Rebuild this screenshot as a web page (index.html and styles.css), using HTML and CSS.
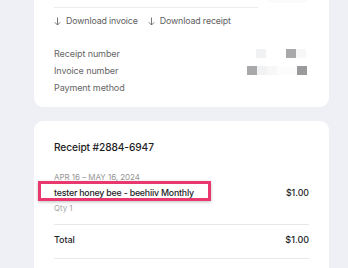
FILE: index.html
```html
<!DOCTYPE html>
<html lang="en">
<head>
  <meta charset="UTF-8" />
  <meta name="viewport" content="width=device-width, initial-scale=1.0" />
  <title>Receipt</title>
  <link rel="stylesheet" href="styles.css">
</head>
<body>
  <div class="page">
    <div class="card card-details">
      <div class="top-row">
        <div class="top-line"></div>
        <div class="top-pill"></div>
      </div>

      <div class="downloads">
        <a href="#" class="download-link">
          <svg class="arrow" width="7" height="9" viewBox="0 0 7 9"><path d="M3.5 0.5V8M0.8 5.3L3.5 8L6.2 5.3" fill="none" stroke="#6a6a6a" stroke-width="0.9"/></svg>Download invoice
        </a>
        <a href="#" class="download-link">
          <svg class="arrow" width="7" height="9" viewBox="0 0 7 9"><path d="M3.5 0.5V8M0.8 5.3L3.5 8L6.2 5.3" fill="none" stroke="#6a6a6a" stroke-width="0.9"/></svg>Download receipt
        </a>
      </div>

      <div class="meta">
        <div class="meta-row">
          <span class="meta-label">Receipt number</span>
          <span class="blur-value receipt-blur">
            <i class="px px-faint"></i><i class="px px-gap"></i><i class="px px-dark"></i><i class="px px-ghost"></i>
          </span>
        </div>
        <div class="meta-row">
          <span class="meta-label">Invoice number</span>
          <span class="blur-value invoice-blur">
            <i class="px px-dark"></i><i class="px px-faint"></i><i class="px px-ghost"></i><i class="px px-ghost2"></i><i class="px px-darker"></i>
          </span>
        </div>
        <div class="meta-row">
          <span class="meta-label">Payment method</span>
        </div>
      </div>
    </div>

    <div class="card card-receipt">
      <h2 class="receipt-title">Receipt #2884-6947</h2>

      <div class="line-item">
        <div class="period">APR 16 – MAY 16, 2024</div>
        <div class="item-row">
          <span class="item-name">tester honey bee - beehiiv Monthly<span class="highlight"></span></span>
          <span class="amount">$1.00</span>
        </div>
        <div class="qty">Qty 1</div>
      </div>

      <div class="total-row">
        <span>Total</span>
        <span class="amount">$1.00</span>
      </div>
    </div>
  </div>
</body>
</html>
```

FILE: styles.css
```css
body {
  margin: 0;
  background: #eff0f6;
  font-family: 'Inter', 'Liberation Sans', sans-serif;
  color: #1d1d1f;
  overflow: hidden;
}

.page {
  width: 295px;
  margin-left: 34px;
  margin-top: -20px;
  display: flex;
  flex-direction: column;
  gap: 14px;
}

.card {
  background: #fff;
  border-radius: 9px;
  padding: 0 20px;
}

/* first card, top is scrolled away */
.card-details {
  padding-top: 12px;
  padding-bottom: 11px;
}

.top-row {
  display: flex;
  align-items: flex-end;
  height: 16px;
  gap: 8px;
}

.top-line {
  width: 208px;
  border-bottom: 1px solid #ececef;
}

.top-pill {
  width: 44px;
  height: 14px;
  margin-bottom: 5px;
  border-radius: 7px;
  background: #fafafc;
}

.downloads {
  display: flex;
  gap: 10px;
  margin-top: 7px;
}

.download-link {
  display: flex;
  align-items: center;
  color: #5e5e5e;
  text-decoration: none;
  font-size: 8.8px;
  letter-spacing: -0.12px;
  line-height: 12px;
}

.arrow {
  margin-right: 5px;
}

.meta {
  margin-top: 18px;
  display: flex;
  flex-direction: column;
}

.meta-row {
  display: flex;
  justify-content: space-between;
  align-items: center;
  height: 17px;
}

.meta-label {
  font-size: 9px;
  letter-spacing: -0.1px;
  color: #666;
}

.blur-value {
  display: flex;
}

.receipt-blur { margin-right: 3px; }
.invoice-blur { margin-right: 2px; }

.px {
  width: 10px;
  height: 9px;
}

.px-faint { background: #f1f2f4; }
.px-gap { width: 20px; }
.px-dark { background: #a9a9ab; }
.px-darker { background: #9a9a9c; }
.px-ghost { background: #f7f7f8; }
.px-ghost2 { background: #fcfcfc; width: 20px; }

.card-receipt {
  padding-top: 19px;
  padding-bottom: 20px;
}

.receipt-title {
  margin: 0;
  font-size: 10.2px;
  letter-spacing: -0.1px;
  font-weight: 500;
  line-height: 14px;
}

.line-item {
  margin-top: 17px;
  padding-bottom: 10px;
  border-bottom: 1px solid #e8e8ec;
}

.period {
  font-size: 8px;
  letter-spacing: -0.05px;
  color: #959595;
  line-height: 12px;
}

.item-row {
  display: flex;
  justify-content: space-between;
  align-items: center;
  margin-top: 4px;
  line-height: 12px;
  font-size: 8.8px;
  letter-spacing: -0.2px;
  font-weight: 500;
}

.item-name {
  position: relative;
}

.highlight {
  position: absolute;
  left: -16px;
  right: -17px;
  top: -6px;
  bottom: -2px;
  border: 3px solid #e8386d;
  box-shadow: 0 1px 3px rgba(0, 0, 0, 0.25);
}

.qty {
  font-size: 7.8px;
  color: #a5a5a5;
  line-height: 12px;
  margin-top: 3px;
}

.total-row {
  display: flex;
  justify-content: space-between;
  align-items: center;
  line-height: 12px;
  padding: 9px 0 12px;
  font-size: 9px;
  letter-spacing: -0.1px;
  font-weight: 500;
  border-bottom: 1px solid #e8e8ec;
}

.amount {
  font-weight: 500;
  letter-spacing: 0;
}
```
